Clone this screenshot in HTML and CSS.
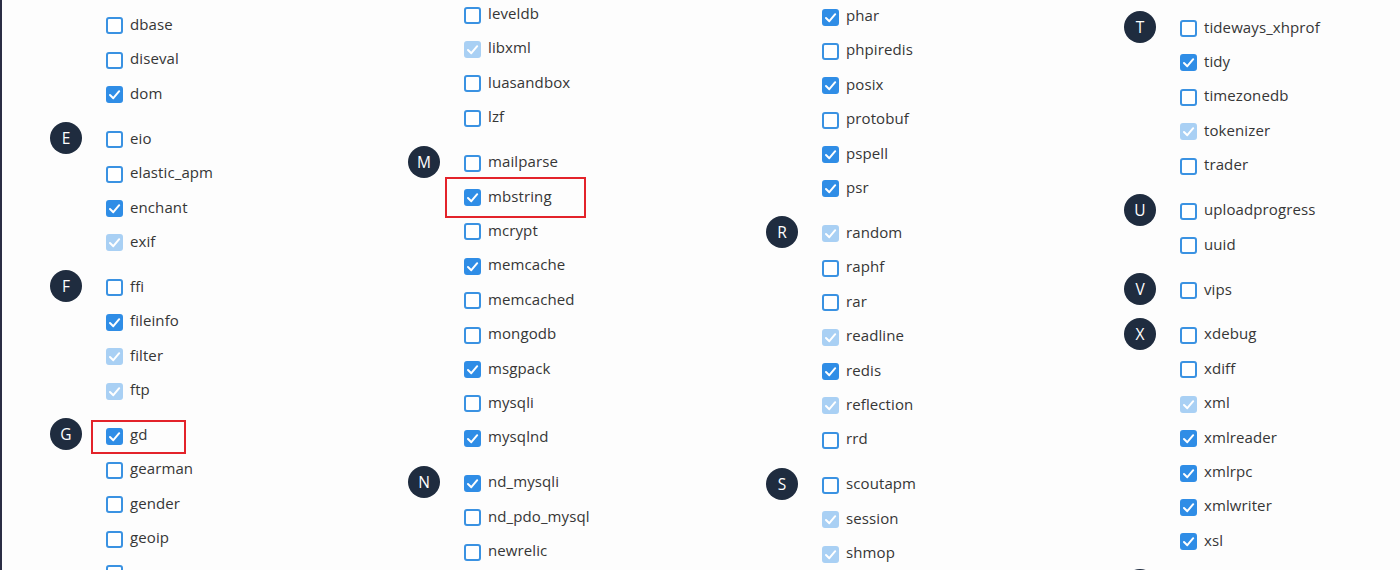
FILE: index.html
```html
<!DOCTYPE html>
<html lang="en">
<head>
<meta charset="utf-8">
<title>PHP extensions</title>
<link rel="stylesheet" href="styles.css">
</head>
<body>
<div class="page">
  <div class="columns">
    <div class="col col-1">
      <div class="group">
        <div class="letter empty"></div>
        <ul class="items">
          <li class="item"><span class="box"></span><span class="name">dbase</span></li>
          <li class="item"><span class="box"></span><span class="name">diseval</span></li>
          <li class="item"><span class="box on"><svg viewBox="0 0 17 17"><polyline points="4,9 7.3,12.2 13.2,5.2"/></svg></span><span class="name">dom</span></li>
        </ul>
      </div>
      <div class="group">
        <div class="letter">E</div>
        <ul class="items">
          <li class="item"><span class="box"></span><span class="name">eio</span></li>
          <li class="item"><span class="box"></span><span class="name">elastic_apm</span></li>
          <li class="item"><span class="box on"><svg viewBox="0 0 17 17"><polyline points="4,9 7.3,12.2 13.2,5.2"/></svg></span><span class="name">enchant</span></li>
          <li class="item"><span class="box dis"><svg viewBox="0 0 17 17"><polyline points="4,9 7.3,12.2 13.2,5.2"/></svg></span><span class="name">exif</span></li>
        </ul>
      </div>
      <div class="group">
        <div class="letter">F</div>
        <ul class="items">
          <li class="item"><span class="box"></span><span class="name">ffi</span></li>
          <li class="item"><span class="box on"><svg viewBox="0 0 17 17"><polyline points="4,9 7.3,12.2 13.2,5.2"/></svg></span><span class="name">fileinfo</span></li>
          <li class="item"><span class="box dis"><svg viewBox="0 0 17 17"><polyline points="4,9 7.3,12.2 13.2,5.2"/></svg></span><span class="name">filter</span></li>
          <li class="item"><span class="box dis"><svg viewBox="0 0 17 17"><polyline points="4,9 7.3,12.2 13.2,5.2"/></svg></span><span class="name">ftp</span></li>
        </ul>
      </div>
      <div class="group">
        <div class="letter">G</div>
        <ul class="items">
          <li class="item"><span class="box on"><svg viewBox="0 0 17 17"><polyline points="4,9 7.3,12.2 13.2,5.2"/></svg></span><span class="name">gd</span></li>
          <li class="item"><span class="box"></span><span class="name">gearman</span></li>
          <li class="item"><span class="box"></span><span class="name">gender</span></li>
          <li class="item"><span class="box"></span><span class="name">geoip</span></li>
          <li class="item"><span class="box"></span><span class="name">geos</span></li>
        </ul>
      </div>
    </div>

    <div class="col col-2">
      <div class="group">
        <div class="letter empty"></div>
        <ul class="items">
          <li class="item"><span class="box"></span><span class="name">leveldb</span></li>
          <li class="item"><span class="box dis"><svg viewBox="0 0 17 17"><polyline points="4,9 7.3,12.2 13.2,5.2"/></svg></span><span class="name">libxml</span></li>
          <li class="item"><span class="box"></span><span class="name">luasandbox</span></li>
          <li class="item"><span class="box"></span><span class="name">lzf</span></li>
        </ul>
      </div>
      <div class="group">
        <div class="letter">M</div>
        <ul class="items">
          <li class="item"><span class="box"></span><span class="name">mailparse</span></li>
          <li class="item"><span class="box on"><svg viewBox="0 0 17 17"><polyline points="4,9 7.3,12.2 13.2,5.2"/></svg></span><span class="name">mbstring</span></li>
          <li class="item"><span class="box"></span><span class="name">mcrypt</span></li>
          <li class="item"><span class="box on"><svg viewBox="0 0 17 17"><polyline points="4,9 7.3,12.2 13.2,5.2"/></svg></span><span class="name">memcache</span></li>
          <li class="item"><span class="box"></span><span class="name">memcached</span></li>
          <li class="item"><span class="box"></span><span class="name">mongodb</span></li>
          <li class="item"><span class="box on"><svg viewBox="0 0 17 17"><polyline points="4,9 7.3,12.2 13.2,5.2"/></svg></span><span class="name">msgpack</span></li>
          <li class="item"><span class="box"></span><span class="name">mysqli</span></li>
          <li class="item"><span class="box on"><svg viewBox="0 0 17 17"><polyline points="4,9 7.3,12.2 13.2,5.2"/></svg></span><span class="name">mysqlnd</span></li>
        </ul>
      </div>
      <div class="group">
        <div class="letter">N</div>
        <ul class="items">
          <li class="item"><span class="box on"><svg viewBox="0 0 17 17"><polyline points="4,9 7.3,12.2 13.2,5.2"/></svg></span><span class="name">nd_mysqli</span></li>
          <li class="item"><span class="box"></span><span class="name">nd_pdo_mysql</span></li>
          <li class="item"><span class="box"></span><span class="name">newrelic</span></li>
        </ul>
      </div>
    </div>

    <div class="col col-3">
      <div class="group">
        <div class="letter empty"></div>
        <ul class="items">
          <li class="item"><span class="box on"><svg viewBox="0 0 17 17"><polyline points="4,9 7.3,12.2 13.2,5.2"/></svg></span><span class="name">phar</span></li>
          <li class="item"><span class="box"></span><span class="name">phpiredis</span></li>
          <li class="item"><span class="box on"><svg viewBox="0 0 17 17"><polyline points="4,9 7.3,12.2 13.2,5.2"/></svg></span><span class="name">posix</span></li>
          <li class="item"><span class="box"></span><span class="name">protobuf</span></li>
          <li class="item"><span class="box on"><svg viewBox="0 0 17 17"><polyline points="4,9 7.3,12.2 13.2,5.2"/></svg></span><span class="name">pspell</span></li>
          <li class="item"><span class="box on"><svg viewBox="0 0 17 17"><polyline points="4,9 7.3,12.2 13.2,5.2"/></svg></span><span class="name">psr</span></li>
        </ul>
      </div>
      <div class="group">
        <div class="letter">R</div>
        <ul class="items">
          <li class="item"><span class="box dis"><svg viewBox="0 0 17 17"><polyline points="4,9 7.3,12.2 13.2,5.2"/></svg></span><span class="name">random</span></li>
          <li class="item"><span class="box"></span><span class="name">raphf</span></li>
          <li class="item"><span class="box"></span><span class="name">rar</span></li>
          <li class="item"><span class="box dis"><svg viewBox="0 0 17 17"><polyline points="4,9 7.3,12.2 13.2,5.2"/></svg></span><span class="name">readline</span></li>
          <li class="item"><span class="box on"><svg viewBox="0 0 17 17"><polyline points="4,9 7.3,12.2 13.2,5.2"/></svg></span><span class="name">redis</span></li>
          <li class="item"><span class="box dis"><svg viewBox="0 0 17 17"><polyline points="4,9 7.3,12.2 13.2,5.2"/></svg></span><span class="name">reflection</span></li>
          <li class="item"><span class="box"></span><span class="name">rrd</span></li>
        </ul>
      </div>
      <div class="group">
        <div class="letter">S</div>
        <ul class="items">
          <li class="item"><span class="box"></span><span class="name">scoutapm</span></li>
          <li class="item"><span class="box dis"><svg viewBox="0 0 17 17"><polyline points="4,9 7.3,12.2 13.2,5.2"/></svg></span><span class="name">session</span></li>
          <li class="item"><span class="box dis"><svg viewBox="0 0 17 17"><polyline points="4,9 7.3,12.2 13.2,5.2"/></svg></span><span class="name">shmop</span></li>
        </ul>
      </div>
    </div>

    <div class="col col-4">
      <div class="group">
        <div class="letter">T</div>
        <ul class="items">
          <li class="item"><span class="box"></span><span class="name">tideways_xhprof</span></li>
          <li class="item"><span class="box on"><svg viewBox="0 0 17 17"><polyline points="4,9 7.3,12.2 13.2,5.2"/></svg></span><span class="name">tidy</span></li>
          <li class="item"><span class="box"></span><span class="name">timezonedb</span></li>
          <li class="item"><span class="box dis"><svg viewBox="0 0 17 17"><polyline points="4,9 7.3,12.2 13.2,5.2"/></svg></span><span class="name">tokenizer</span></li>
          <li class="item"><span class="box"></span><span class="name">trader</span></li>
        </ul>
      </div>
      <div class="group">
        <div class="letter">U</div>
        <ul class="items">
          <li class="item"><span class="box"></span><span class="name">uploadprogress</span></li>
          <li class="item"><span class="box"></span><span class="name">uuid</span></li>
        </ul>
      </div>
      <div class="group">
        <div class="letter">V</div>
        <ul class="items">
          <li class="item"><span class="box"></span><span class="name">vips</span></li>
        </ul>
      </div>
      <div class="group">
        <div class="letter">X</div>
        <ul class="items">
          <li class="item"><span class="box"></span><span class="name">xdebug</span></li>
          <li class="item"><span class="box"></span><span class="name">xdiff</span></li>
          <li class="item"><span class="box dis"><svg viewBox="0 0 17 17"><polyline points="4,9 7.3,12.2 13.2,5.2"/></svg></span><span class="name">xml</span></li>
          <li class="item"><span class="box on"><svg viewBox="0 0 17 17"><polyline points="4,9 7.3,12.2 13.2,5.2"/></svg></span><span class="name">xmlreader</span></li>
          <li class="item"><span class="box on"><svg viewBox="0 0 17 17"><polyline points="4,9 7.3,12.2 13.2,5.2"/></svg></span><span class="name">xmlrpc</span></li>
          <li class="item"><span class="box on"><svg viewBox="0 0 17 17"><polyline points="4,9 7.3,12.2 13.2,5.2"/></svg></span><span class="name">xmlwriter</span></li>
          <li class="item"><span class="box on"><svg viewBox="0 0 17 17"><polyline points="4,9 7.3,12.2 13.2,5.2"/></svg></span><span class="name">xsl</span></li>
        </ul>
      </div>
      <div class="group">
        <div class="letter blank"></div>
      </div>
    </div>
  </div>

  <div class="mark mark-gd"></div>
  <div class="mark mark-mbstring"></div>
</div>
</body>
</html>
```

FILE: styles.css
```css
html, body {
  margin: 0;
  padding: 0;
  height: 100%;
  overflow: hidden;
}

body {
  background: #fdfdfd;
  font-family: "Open Sans", "Liberation Sans", sans-serif;
  color: #363636;
}

.page {
  position: relative;
  height: 570px;
  border-left: 2px solid #2b2d44;
  box-sizing: border-box;
  overflow: hidden;
}

.columns {
  display: flex;
  align-items: flex-start;
  padding-left: 48px;
}

.col {
  width: 358px;
  flex: 0 0 358px;
  display: flex;
  flex-direction: column;
  gap: 10.6px;
}

.col-1 { margin-top: 7.8px; }
.col-2 { margin-top: -3.2px; }
.col-3 { margin-top: -1.2px; }
.col-4 { margin-top: 10.4px; }

.group {
  display: flex;
  align-items: flex-start;
}

.letter {
  width: 32px;
  height: 32px;
  margin-top: 0.6px;
  border-radius: 50%;
  background: #1f2c3f;
  color: #fff;
  font-size: 15.5px;
  display: flex;
  align-items: center;
  justify-content: center;
  flex: 0 0 32px;
}

.letter.empty {
  background: transparent;
}

.items {
  list-style: none;
  margin: 0 0 0 24px;
  padding: 0;
  display: flex;
  flex-direction: column;
}

.item {
  height: 34.4px;
  display: flex;
  align-items: center;
  gap: 7px;
  font-size: 15px;
  letter-spacing: 0.1px;
}

.item .name {
  position: relative;
  top: -1px;
}

.box {
  width: 17px;
  height: 17px;
  box-sizing: border-box;
  border: 2px solid #3a92e2;
  border-radius: 3px;
  background: #fff;
  flex: 0 0 17px;
  display: flex;
  align-items: center;
  justify-content: center;
  position: relative;
  top: 1px;
}

.box svg {
  width: 17px;
  height: 17px;
  flex: 0 0 17px;
  margin: -2px;
}

.box polyline {
  fill: none;
  stroke: #fff;
  stroke-width: 2;
  stroke-linecap: round;
  stroke-linejoin: round;
}

.box.on {
  background: #2f8de6;
  border-color: #2f8de6;
}

.box.dis {
  background: #a9d0f4;
  border-color: #a9d0f4;
}

.mark {
  position: absolute;
  box-sizing: border-box;
  border: 2px solid #e3232a;
}

.mark-gd {
  left: 89px;
  top: 420px;
  width: 95px;
  height: 34px;
}

.mark-mbstring {
  left: 443px;
  top: 177px;
  width: 141px;
  height: 41px;
}
```
